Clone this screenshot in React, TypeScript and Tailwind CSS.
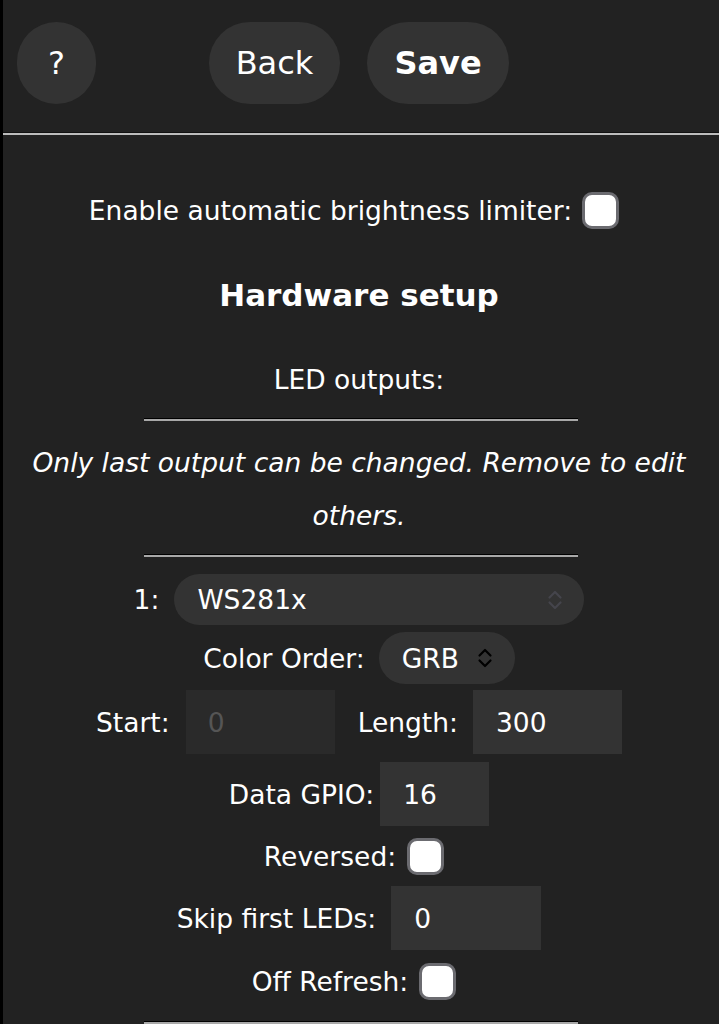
import React from "react";

function Check() {
  return (
    <span className="inline-block w-[37px] h-[37px] rounded-[10px] bg-white border-[3px] border-[#6b6b70] shrink-0" />
  );
}

function Chevrons({ color }: { color: string }) {
  return (
    <svg width="16" height="24" viewBox="0 0 16 24" fill="none" stroke={color} strokeWidth="2.2" strokeLinecap="round" strokeLinejoin="round">
      <path d="M2.5 9.5 L8 4 L13.5 9.5" />
      <path d="M2.5 14.5 L8 20 L13.5 14.5" />
    </svg>
  );
}

function Hr({ className }: { className: string }) {
  return <div className={`ml-[141px] w-[434px] h-0 border-t border-t-black border-b-2 border-b-[#a8a8a8] ${className}`} />;
}

export default function App() {
  return (
    <div className="min-h-screen bg-[#222] text-white font-['DejaVu_Sans',Verdana,sans-serif] text-[26.5px] leading-[53px] border-l-[3px] border-black pr-[4px] overflow-hidden">
      {/* top bar */}
      <div className="relative h-[132px] flex justify-center items-start pt-[22px] gap-[27px]">
        <button className="absolute left-[14px] top-[22px] w-[79px] h-[82px] rounded-[40px] bg-[#333] text-[32px] leading-none">
          ?
        </button>
        <button className="w-[131px] h-[82px] rounded-[41px] bg-[#333] text-[32px] leading-none">Back</button>
        <button className="w-[142px] h-[82px] rounded-[41px] bg-[#333] text-[32px] leading-none font-bold">Save</button>
      </div>
      <div className="-mr-[4px] h-0 border-t border-t-[#111] border-b-2 border-b-[#bdbdbd]" />

      {/* enable row */}
      <div className="mt-[49px] h-[53px] flex justify-center items-center">
        <span>Enable automatic brightness limiter:</span>
        <span className="ml-[10px] mr-[10px] flex"><Check /></span>
      </div>

      <div className="h-[116px] flex justify-center items-center">
        <h3 className="text-[31px] font-bold">Hardware setup</h3>
      </div>

      <div className="h-[52px] flex justify-center items-center">LED outputs:</div>

      <Hr className="mt-[13px]" />

      <p className="mt-[15px] px-[10px] text-center italic">
        Only last output can be changed. Remove to edit others.
      </p>

      <Hr className="mt-[12px]" />

      {/* type select */}
      <div className="mt-[17px] h-[51px] flex justify-center items-center gap-[15px]">
        <span>1:</span>
        <div className="w-[410px] h-[51px] rounded-full bg-[#333] flex items-center justify-between pl-[23px] pr-[21px]">
          <span>WS281x</span>
          <Chevrons color="#45454c" />
        </div>
      </div>

      {/* color order */}
      <div className="mt-[7px] h-[52px] flex justify-center items-center gap-[14px]">
        <span>Color Order:</span>
        <div className="w-[136px] h-[52px] rounded-full bg-[#333] flex items-center justify-between pl-[23px] pr-[22px]">
          <span>GRB</span>
          <Chevrons color="#000" />
        </div>
      </div>

      {/* start / length */}
      <div className="mt-[6px] h-[64px] flex justify-center items-center">
        <span>Start:</span>
        <div className="ml-[16px] w-[149px] h-[64px] bg-[#2a2a2a] text-[#555] flex items-center pl-[22px]">0</div>
        <span className="ml-[23px]">Length:</span>
        <div className="ml-[15px] w-[149px] h-[64px] bg-[#333] flex items-center pl-[23px]">300</div>
      </div>

      {/* data gpio */}
      <div className="mt-[8px] h-[64px] flex justify-center items-center gap-[6px]">
        <span>Data GPIO:</span>
        <div className="w-[109px] h-[64px] bg-[#333] flex items-center pl-[23px]">16</div>
      </div>

      {/* reversed */}
      <div className="h-[60px] flex justify-center items-center">
        <span>Reversed:</span>
        <span className="ml-[11px] mr-[10px] flex"><Check /></span>
      </div>

      {/* skip first */}
      <div className="h-[64px] flex justify-center items-center gap-[15px]">
        <span>Skip first LEDs:</span>
        <div className="w-[150px] h-[64px] bg-[#333] flex items-center pl-[23px]">0</div>
      </div>

      {/* off refresh */}
      <div className="h-[62px] flex justify-center items-center">
        <span>Off Refresh:</span>
        <span className="ml-[11px] mr-[10px] flex"><Check /></span>
      </div>

      <Hr className="mt-[9px]" />
      <div className="h-[40px]" />
    </div>
  );
}
